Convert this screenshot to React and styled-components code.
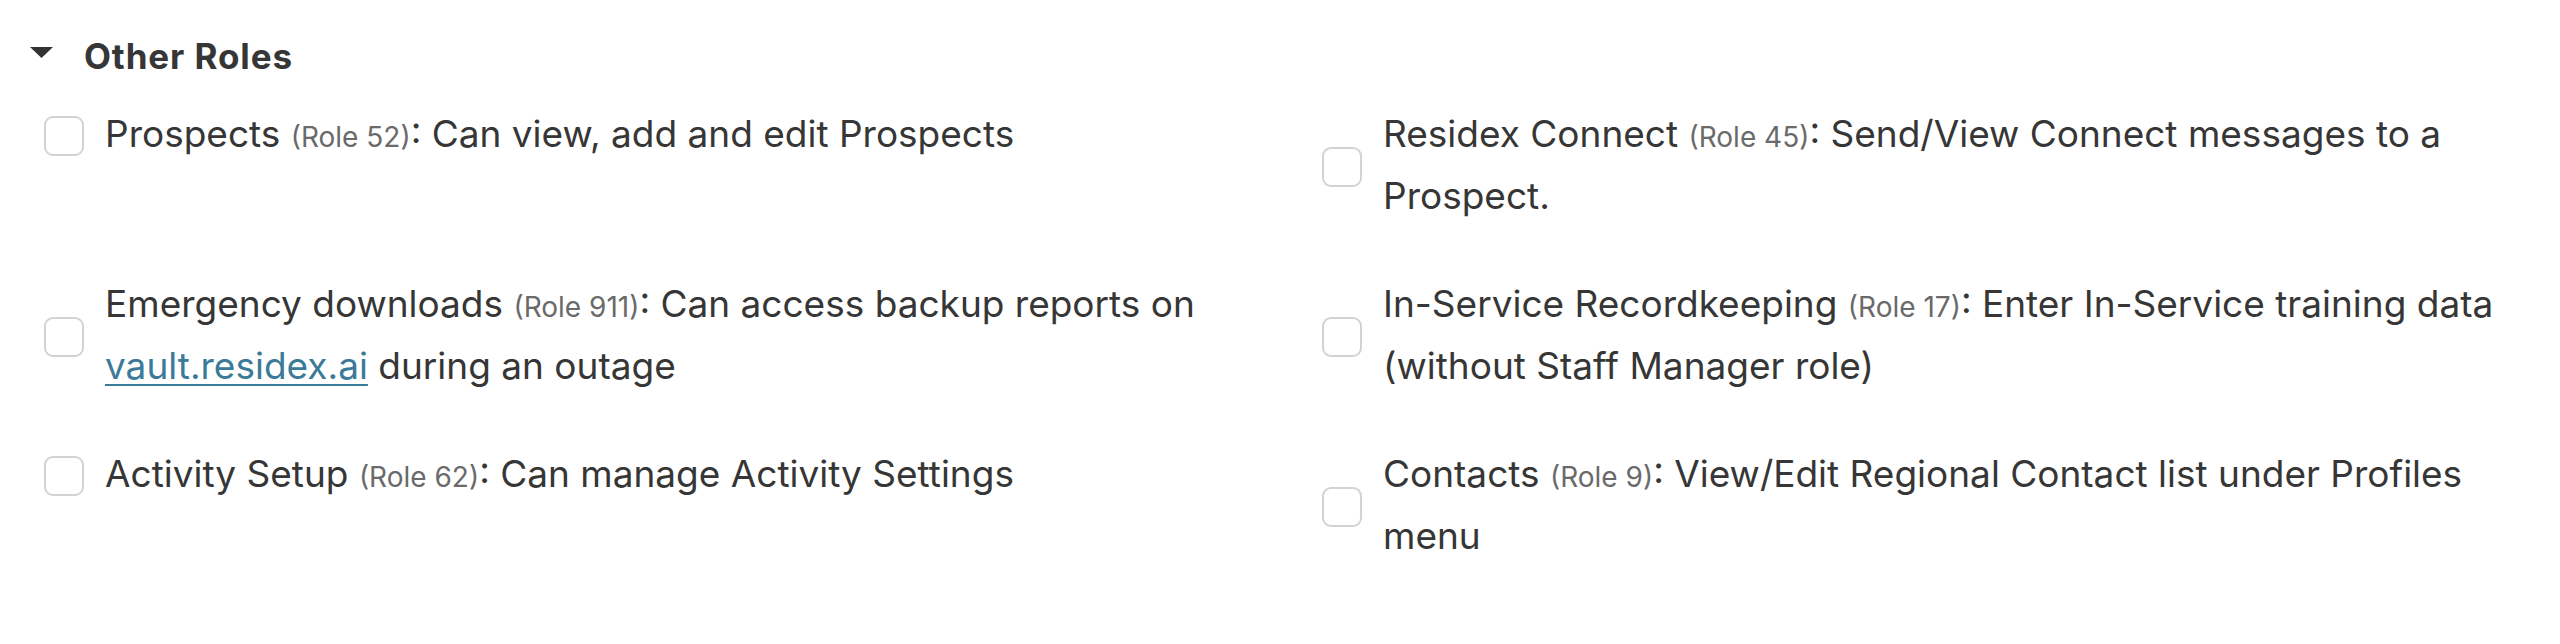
import React from 'react';
import styled, { createGlobalStyle } from 'styled-components';

const GlobalStyle = createGlobalStyle`
    body {
        margin: 0;
        background: #fff;
        font-family: Inter, "Liberation Sans", sans-serif;
        color: #363636;
    }
`

const Section = styled.section`
    padding: 32px 40px 0 0;
`

const Summary = styled.div`
    display: flex;
    align-items: center;
    padding-left: 30px;
    gap: 31px;
    font-size: 35px;
    line-height: 48px;
    font-weight: 700;
    letter-spacing: 0.9px;
    color: #363636;
`

const Caret = styled.svg`
    width: 23px;
    height: 11px;
    margin-bottom: 8px;
    flex: none;
`

const RoleGrid = styled.div`
    display: grid;
    grid-template-columns: 1fr 1fr;
    column-gap: 80px;
    row-gap: 46px;
    align-items: start;
    margin-top: 23px;
    padding-left: 44px;
`

const RoleItem = styled.label`
    display: flex;
    align-items: center;
    gap: 21px;
    cursor: pointer;
`

const Box = styled.span`
    flex: none;
    width: 40px;
    height: 40px;
    box-sizing: border-box;
    border: 2px solid #d3d3d3;
    border-radius: 9px;
    background: #fff;
    margin-top: 3px;
`

const RoleText = styled.span`
    font-size: 37px;
    line-height: 62px;
    color: #363636;
`

const RoleTag = styled.span`
    font-size: 28px;
    line-height: 0;
    color: #6a6a6a;
`

const VaultLink = styled.a`
    color: #3b7a98;
    text-decoration: underline;
    text-underline-offset: 5px;
    text-decoration-thickness: 2px;
`

const roles = [
    { name: 'Prospects', id: 52, desc: ': Can view, add and edit Prospects' },
    { name: 'Residex Connect', id: 45, desc: ': Send/View Connect messages to a Prospect.' },
    { name: 'Emergency downloads', id: 911, desc: ': Can access backup reports on ', link: true },
    { name: 'In-Service Recordkeeping', id: 17, desc: ': Enter In-Service training data (without Staff Manager role)' },
    { name: 'Activity Setup', id: 62, desc: ': Can manage Activity Settings' },
    { name: 'Contacts', id: 9, desc: ': View/Edit Regional Contact list under Profiles menu' },
];

const App = () => {
    return (
        <>
            <GlobalStyle />
            <Section>
                <Summary>
                    <Caret viewBox="0 0 23 11">
                        <path d="M0 0 L23 0 L11.5 11 Z" fill="#333" />
                    </Caret>
                    Other Roles
                </Summary>
                <RoleGrid>
                    {roles.map((r) => (
                        <RoleItem key={r.id}>
                            <Box />
                            <RoleText>
                                {r.name} <RoleTag>(Role {r.id})</RoleTag>{r.desc}
                                {r.link && (
                                    <>
                                        <VaultLink href="#">vault.residex.ai</VaultLink> during an outage
                                    </>
                                )}
                            </RoleText>
                        </RoleItem>
                    ))}
                </RoleGrid>
            </Section>
        </>
    );
};

export default App;
